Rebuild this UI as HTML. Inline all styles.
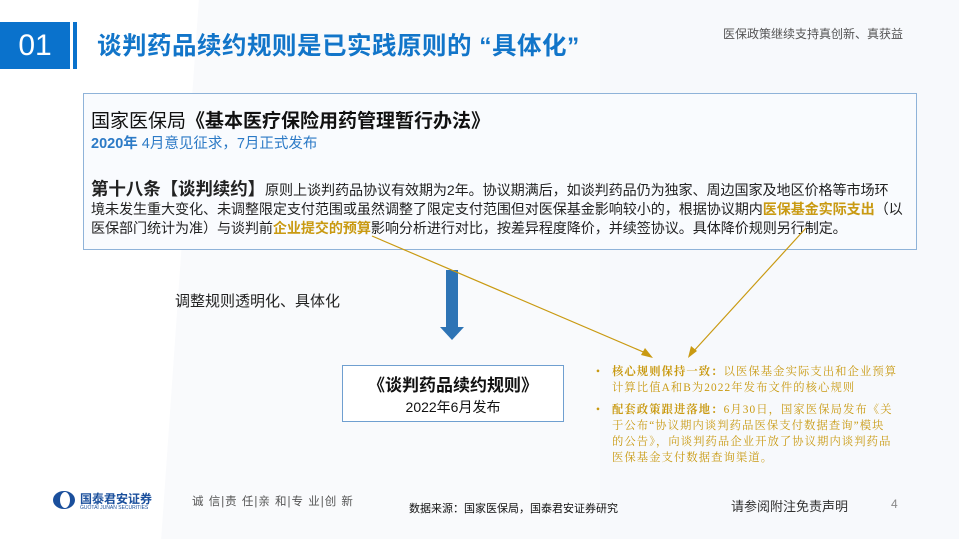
<!DOCTYPE html>
<html><head><meta charset="utf-8"><style>
*{margin:0;padding:0;box-sizing:border-box}
body{width:959px;height:539px;overflow:hidden;background:#fff;position:relative;font-family:"Liberation Sans","Noto Sans CJK SC",sans-serif}
.abs{position:absolute}
.bg1{left:180px;top:0;width:480px;height:539px;background:#f9fafc;transform:skewX(-4deg)}
.bg2{left:600px;top:0;width:360px;height:539px;background:#f7f9fc}
.nw{white-space:nowrap}
</style></head><body>
<div class="abs bg1"></div><div class="abs bg2"></div>
<div class="abs" style="left:0;top:22px;width:70px;height:47px;background:#0a72cc;color:#fff;font-size:30px;line-height:47px;text-align:center">01</div>
<div class="abs" style="left:73px;top:22px;width:4px;height:47px;background:#0a72cc"></div>
<div class="abs nw" style="left:97px;top:27px;font-size:24.5px;font-weight:bold;color:#1275c9;letter-spacing:0.5px">谈判药品续约规则是已实践原则的 “具体化”</div>
<div class="abs" style="left:723px;top:25px;font-size:12px;color:#555">医保政策继续支持真创新、真获益</div>

<div class="abs" style="left:83px;top:93px;width:834px;height:157px;border:1.5px solid #8fb3d9;background:#f9fbfe"></div>
<div class="abs" style="left:91px;top:106px;font-size:19px;color:#111">国家医保局<b>《基本医疗保险用药管理暂行办法》</b></div>
<div class="abs" style="left:91px;top:132px;font-size:14.5px;color:#2c7ac6"><b>2020年</b> 4月意见征求，7月正式发布</div>
<div class="abs nw" style="left:91px;top:180px;font-size:14.1px;line-height:19px;color:#222;letter-spacing:-0.1px"><b style="font-size:17.5px">第十八条【谈判续约】</b>原则上谈判药品协议有效期为2年。协议期满后，如谈判药品仍为独家、周边国家及地区价格等市场环<br>境未发生重大变化、未调整限定支付范围或虽然调整了限定支付范围但对医保基金影响较小的，根据协议期内<b style="color:#c99a12">医保基金实际支出</b>（以<br>医保部门统计为准）与谈判前<b style="color:#c99a12">企业提交的预算</b>影响分析进行对比，按差异程度降价，并续签协议。具体降价规则另行制定。</div>

<div class="abs" style="left:175px;top:290px;font-size:15px;color:#222">调整规则透明化、具体化</div>
<svg class="abs" style="left:0;top:0" width="959" height="539">
<rect x="446" y="270" width="12" height="58" fill="#2e74b5"/>
<polygon points="440,327 464,327 452,340" fill="#2e74b5"/>
<line x1="372" y1="236" x2="648" y2="354" stroke="#c99a12" stroke-width="1.2"/>
<polygon points="653,358 641,355 645,348" fill="#c99a12"/>
<line x1="806" y1="228" x2="692" y2="353" stroke="#c99a12" stroke-width="1.2"/>
<polygon points="688,358 691,346 697,351" fill="#c99a12"/>
</svg>
<div class="abs" style="left:342px;top:365px;width:222px;height:57px;border:1.5px solid #6f9fd0;background:#fff;text-align:center;color:#111">
<div style="font-size:17px;font-weight:bold;margin-top:5px">《谈判药品续约规则》</div>
<div style="font-size:14px;margin-top:1px">2022年6月发布</div></div>

<div class="abs nw" style="left:596px;top:364px;font-size:11.3px;line-height:16px;letter-spacing:1.1px;color:#c99a12;font-family:'Liberation Serif','Noto Serif CJK SC',serif">
<div style="padding-left:16px;position:relative"><span style="position:absolute;left:0">•</span><b>核心规则保持一致：</b>以医保基金实际支出和企业预算<br>计算比值A和B为2022年发布文件的核心规则</div>
<div style="padding-left:16px;position:relative;margin-top:6px"><span style="position:absolute;left:0">•</span><b>配套政策跟进落地：</b>6月30日，国家医保局发布《关<br>于公布“协议期内谈判药品医保支付数据查询”模块<br>的公告》，向谈判药品企业开放了协议期内谈判药品<br>医保基金支付数据查询渠道。</div>
</div>

<svg class="abs" style="left:52px;top:490px" width="24" height="20"><ellipse cx="12" cy="10" rx="11" ry="9" fill="#1a4f9c"/><ellipse cx="13" cy="10" rx="5" ry="8" fill="#fff"/></svg>
<div class="abs" style="left:80px;top:490px;font-size:12px;font-weight:bold;color:#1a4f9c">国泰君安证券</div>
<div class="abs" style="left:80px;top:505px;font-size:5px;color:#1a4f9c;white-space:nowrap">GUOTAI JUNAN SECURITIES</div>
<div class="abs" style="left:192px;top:493px;font-size:11.5px;color:#555;letter-spacing:1px">诚 信|责 任|亲 和|专 业|创 新</div>
<div class="abs" style="left:409px;top:500px;font-size:11px;color:#111">数据来源：国家医保局，国泰君安证券研究</div>
<div class="abs" style="left:731px;top:496px;font-size:13px;color:#333">请参阅附注免责声明</div>
<div class="abs" style="left:891px;top:497px;font-size:12px;color:#888">4</div>
</body></html>
